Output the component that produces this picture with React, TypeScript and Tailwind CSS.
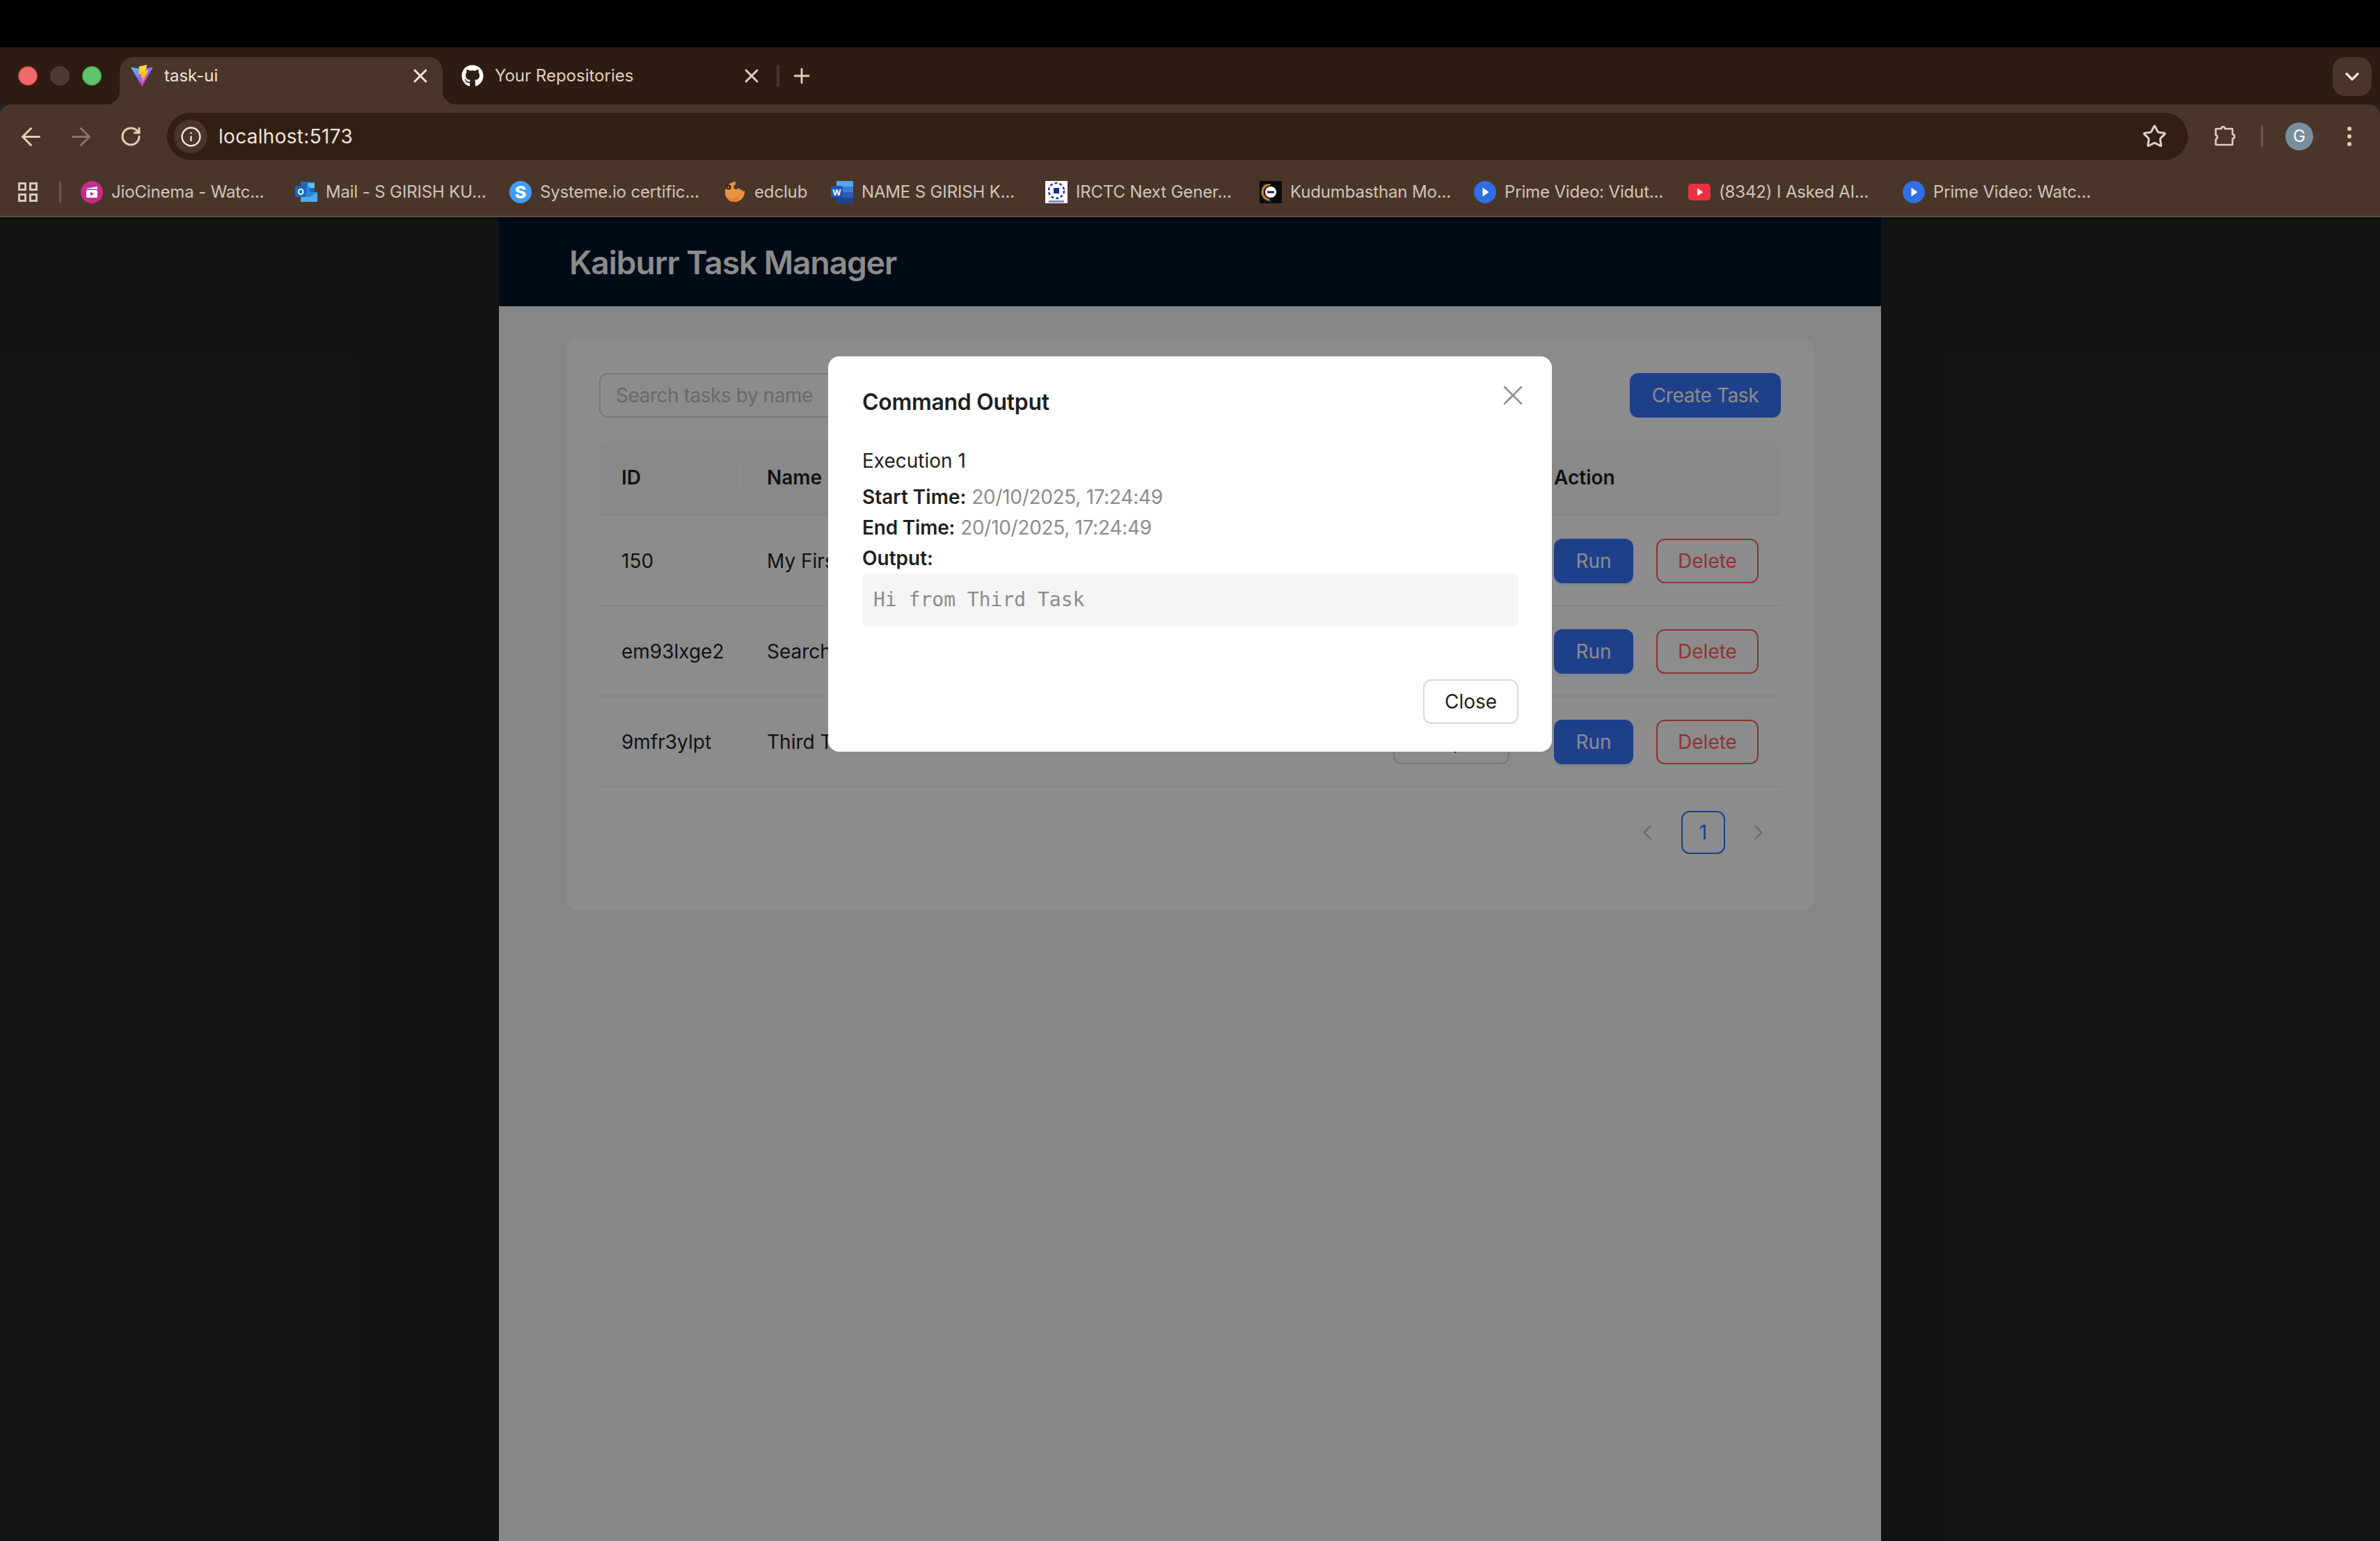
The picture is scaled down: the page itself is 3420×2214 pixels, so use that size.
import { ArrowLeft, ArrowRight, ChevronDown, ChevronLeft, ChevronRight, Info, Plus, RotateCw, Star, X } from 'lucide-react'
import { FaGithub } from 'react-icons/fa'

function ViteLogo() {
  return (
    <svg viewBox="0 0 410 404" className="w-[32px] h-[32px]" fill="none">
      <defs>
        <linearGradient id="vite-a" x1="6" y1="33" x2="235" y2="344" gradientUnits="userSpaceOnUse">
          <stop stopColor="#41D1FF" />
          <stop offset="1" stopColor="#BD34FE" />
        </linearGradient>
        <linearGradient id="vite-b" x1="194" y1="8" x2="236" y2="292" gradientUnits="userSpaceOnUse">
          <stop stopColor="#FFEA83" />
          <stop offset="0.08" stopColor="#FFDD35" />
          <stop offset="1" stopColor="#FFA800" />
        </linearGradient>
      </defs>
      <path
        d="M399.641 59.5246L215.643 388.545C211.844 395.338 202.084 395.378 198.228 388.618L10.5817 59.5563C6.38087 52.1896 12.6802 43.2665 21.0281 44.7586L205.223 77.6824C206.398 77.8924 207.601 77.8904 208.776 77.6763L389.119 44.8058C397.439 43.2894 403.768 52.1434 399.641 59.5246Z"
        fill="url(#vite-a)"
      />
      <path
        d="M292.965 1.5744L156.801 28.2552C154.563 28.6937 152.906 30.5903 152.771 32.8664L144.395 174.33C144.198 177.662 147.258 180.248 150.51 179.498L188.42 170.749C191.967 169.931 195.172 173.055 194.443 176.622L183.18 231.775C182.422 235.487 185.907 238.661 189.532 237.56L212.947 230.446C216.577 229.344 220.065 232.527 219.297 236.242L201.398 322.875C200.278 328.294 207.486 331.249 210.492 326.603L212.5 323.5L323.454 102.072C325.312 98.3645 322.108 94.137 318.036 94.9228L279.014 102.454C275.347 103.161 272.227 99.746 273.262 96.1583L298.731 7.86689C299.767 4.27314 296.636 0.855181 292.965 1.5744Z"
        fill="url(#vite-b)"
      />
    </svg>
  )
}

function JioIcon() {
  return (
    <svg viewBox="0 0 32 32" className="w-[32px] h-[32px]">
      <circle cx="16" cy="16" r="16" fill="#c92a8e" />
      <path d="M8 11l16-3v3.5H8z" fill="#fff" />
      <rect x="8" y="13" width="16" height="11" rx="1.5" fill="#fff" />
      <path d="M14 15.5l5 3-5 3z" fill="#c92a8e" />
    </svg>
  )
}

function OutlookIcon() {
  return (
    <svg viewBox="0 0 32 32" className="w-[32px] h-[32px]">
      <rect x="8" y="1" width="20" height="16" fill="#1f66b8" />
      <rect x="18" y="3" width="10" height="7" fill="#5cc1f0" />
      <rect x="13" y="8" width="8" height="8" fill="#2f7fd6" />
      <path d="M8 16h24v14H8z" fill="#2a86d8" />
      <path d="M9 17l11 7 12-8v14H8z" fill="#53a9e8" />
      <rect x="0" y="7" width="16" height="16" rx="1" fill="#1667c1" />
      <text x="8" y="20" textAnchor="middle" fontSize="12" fontWeight="700" fill="#fff" fontFamily="Inter, sans-serif">O</text>
    </svg>
  )
}

function WordIcon() {
  return (
    <svg viewBox="0 0 32 32" className="w-[32px] h-[32px]">
      <rect x="8" y="0" width="24" height="8" fill="#5aa5e8" />
      <rect x="8" y="8" width="24" height="8" fill="#3a7bd0" />
      <rect x="8" y="16" width="24" height="8" fill="#2a5db5" />
      <rect x="8" y="24" width="24" height="8" fill="#1c4596" />
      <rect x="0" y="7" width="17" height="17" rx="1" fill="#1f55b5" />
      <text x="8.5" y="20.5" textAnchor="middle" fontSize="12" fontWeight="700" fill="#fff" fontFamily="Inter, sans-serif">W</text>
    </svg>
  )
}

function SystemeIcon() {
  return (
    <svg viewBox="0 0 32 32" className="w-[32px] h-[32px]">
      <circle cx="16" cy="16" r="16" fill="#3f9df6" />
      <text x="16" y="24.5" textAnchor="middle" fontSize="25" fontWeight="800" fill="#fff" fontFamily="Inter, sans-serif">S</text>
    </svg>
  )
}

function EdclubIcon() {
  return (
    <svg viewBox="0 0 32 32" className="w-[32px] h-[32px]">
      <path
        d="M6 6c3-3 7-5 11-5-1 2 0 3 1 4-3 0-5 3-3 6 2 2 5 1 7-1l2 3 2-1 1 3 3-1c1 9-6 16-14 16C7 30 1 23 2 15c0-3 2-6 4-9z"
        fill="#ea9440"
      />
      <path d="M4 22c6 5 14 4 19-3 1 6-4 11-10 11-4 0-7-3-9-8z" fill="#e67d34" />
      <circle cx="7" cy="9" r="3.5" fill="#2b1b12" />
      <circle cx="6.5" cy="9" r="1" fill="#fff" />
    </svg>
  )
}

function IrctcIcon() {
  return (
    <svg viewBox="0 0 32 32" className="w-[32px] h-[32px]">
      <rect width="32" height="32" fill="#fff" />
      <circle cx="16" cy="14" r="11" fill="none" stroke="#2b3b9a" strokeWidth="2.5" strokeDasharray="4 3" />
      <rect x="12" y="10" width="8" height="8" fill="#1f2a8a" />
      <rect x="5" y="28" width="22" height="3" fill="#7f88c4" />
    </svg>
  )
}

function ZeeIcon() {
  return (
    <svg viewBox="0 0 32 32" className="w-[32px] h-[32px]">
      <rect width="32" height="32" fill="#0b0b0b" />
      <circle cx="16" cy="16" r="13" fill="none" stroke="#3fa58c" strokeWidth="1.2" strokeDasharray="34 48" strokeDashoffset="-20" />
      <circle cx="15" cy="16" r="11" fill="none" stroke="#e8a02c" strokeWidth="1.5" strokeDasharray="34 36" strokeDashoffset="-18" />
      <circle cx="15" cy="16" r="9.5" fill="none" stroke="#d9453c" strokeWidth="1.2" strokeDasharray="30 30" strokeDashoffset="-15" />
      <circle cx="16" cy="16" r="8" fill="#fff" />
      <rect x="11" y="14.5" width="10" height="3" fill="#222" />
    </svg>
  )
}

function PrimeIcon() {
  return (
    <svg viewBox="0 0 32 32" className="w-[32px] h-[32px]">
      <circle cx="16" cy="16" r="16" fill="#2f6fe4" />
      <path d="M12.5 9.5l9 6.5-9 6.5z" fill="#fff" />
    </svg>
  )
}

function YoutubeIcon() {
  return (
    <svg viewBox="0 0 32 32" className="w-[32px] h-[32px]">
      <rect y="4" width="32" height="24" rx="5" fill="#e9303f" />
      <path d="M13 10.5l8 5.5-8 5.5z" fill="#fff" />
    </svg>
  )
}

const bookmarks = [
  { title: 'JioCinema - Watc...', icon: <JioIcon />, width: 'w-[308px]' },
  { title: 'Mail - S GIRISH KU...', icon: <OutlookIcon />, width: 'w-[308px]' },
  { title: 'Systeme.io certific...', icon: <SystemeIcon />, width: 'w-[308px]' },
  { title: 'edclub', icon: <EdclubIcon />, width: 'w-[154px]' },
  { title: 'NAME S GIRISH K...', icon: <WordIcon />, width: 'w-[308px]' },
  { title: 'IRCTC Next Gener...', icon: <IrctcIcon />, width: 'w-[308px]' },
  { title: 'Kudumbasthan Mo...', icon: <ZeeIcon />, width: 'w-[308px]' },
  { title: 'Prime Video: Vidut...', icon: <PrimeIcon />, width: 'w-[308px]' },
  { title: '(8342) I Asked AI...', icon: <YoutubeIcon />, width: 'w-[308px]' },
  { title: 'Prime Video: Watc...', icon: <PrimeIcon />, width: 'w-[308px]' },
]

const tasks = [
  { id: '150', name: 'My First Task' },
  { id: 'em93lxge2', name: 'Search Task' },
  { id: '9mfr3ylpt', name: 'Third Task' },
]

function BrowserChrome() {
  return (
    <div className="shrink-0">
      <div className="h-[68px] bg-black" />
      <div className="h-[82px] bg-[#2d1c11] flex items-end relative">
        <div className="flex items-center gap-[18px] pl-[26px] w-[172px] h-full">
          <span className="w-[28px] h-[28px] rounded-full bg-[#ee6a6a] border border-[#d8342f]" />
          <span className="w-[28px] h-[28px] rounded-full bg-[#4a3a30]" />
          <span className="w-[28px] h-[28px] rounded-full bg-[#60c468] border border-[#3fa848]" />
        </div>
        <div className="relative w-[464px] h-[68px] bg-[#4a3629] rounded-t-[20px] flex items-center pl-[16px] pr-[16px] pb-[14px] text-[24px] text-[#efe3da]">
          <span className="absolute -left-[20px] bottom-0 w-[20px] h-[20px] bg-[radial-gradient(circle_at_0_0,transparent_20px,#4a3629_20.5px)]" />
          <span className="absolute -right-[20px] bottom-0 w-[20px] h-[20px] bg-[radial-gradient(circle_at_100%_0,transparent_20px,#4a3629_20.5px)]" />
          <ViteLogo />
          <span className="ml-[16px] flex-1">task-ui</span>
          <X className="w-[32px] h-[32px] text-[#efe3da]" strokeWidth={2.25} />
        </div>
        <div className="w-[480px] h-[68px] flex items-center pl-[27px] pr-[20px] pb-[14px] text-[24px] text-[#e3cdbb]">
          <FaGithub className="w-[32px] h-[32px] text-white" />
          <span className="ml-[16px] flex-1">Your Repositories</span>
          <X className="w-[32px] h-[32px] text-[#e3cdbb]" strokeWidth={2.25} />
        </div>
        <div className="h-[68px] flex items-center gap-[15px] pb-[14px]">
          <span className="w-[4px] h-[32px] bg-[#4a3629] rounded-full" />
          <Plus className="w-[34px] h-[34px] text-[#e3cdbb]" strokeWidth={2} />
        </div>
        <div className="absolute right-[12px] top-[14px] w-[56px] h-[56px] rounded-[18px] bg-[#4a3629] flex items-center justify-center">
          <ChevronDown className="w-[32px] h-[32px] text-[#efe3da]" strokeWidth={2.5} />
        </div>
      </div>
      <div className="h-[162px] bg-[#4a3629] rounded-t-[16px] border-b-2 border-[#5f5146]">
        <div className="h-[92px] flex items-center pl-[24px] pr-[24px]">
          <ArrowLeft className="w-[41px] h-[41px] text-[#e3cdbb]" strokeWidth={1.75} />
          <ArrowRight className="w-[41px] h-[41px] text-[#8a7465] ml-[31px]" strokeWidth={1.75} />
          <RotateCw className="w-[32px] h-[32px] text-[#e3cdbb] ml-[35px]" strokeWidth={2.25} />
          <div className="ml-[36px] w-[2904px] h-[68px] rounded-full bg-[#321f13] flex items-center pl-[10px] pr-[30px]">
            <div className="w-[48px] h-[48px] rounded-full bg-[#4a3629] flex items-center justify-center">
              <Info className="w-[31px] h-[31px] text-[#efe3da]" strokeWidth={1.9} />
            </div>
            <span className="ml-[16px] text-[28px] tracking-[0.3px] text-[#efe3da] flex-1">localhost:5173</span>
            <Star className="w-[36px] h-[36px] text-[#d8cfc8]" strokeWidth={2} />
          </div>
          <svg viewBox="0 0 32 32" className="ml-[38px] w-[32px] h-[32px] text-[#e3cdbb]" fill="none" stroke="currentColor" strokeWidth="2.6" strokeLinejoin="round">
            <path d="M2 5h8c0-4 5-4 5 0h11v8c4 0 4 6 0 6v9H2v-8c3-1 3-5 0-6z" />
          </svg>
          <span className="ml-[35px] w-[3px] h-[32px] bg-[#6b5a4e] rounded-full" />
          <div className="ml-[32px] w-[40px] h-[40px] rounded-full bg-[#7a8f9e] flex items-center justify-center text-[24px] text-white">G</div>
          <div className="ml-[49px] flex flex-col gap-[5px]">
            <span className="w-[6px] h-[6px] rounded-full bg-[#e3cdbb]" />
            <span className="w-[6px] h-[6px] rounded-full bg-[#e3cdbb]" />
            <span className="w-[6px] h-[6px] rounded-full bg-[#e3cdbb]" />
          </div>
        </div>
        <div className="flex items-center h-[48px] mt-[10px] pl-[26px]">
          <svg viewBox="0 0 28 28" className="w-[28px] h-[28px]" fill="none" stroke="#d4c8bf" strokeWidth="3">
            <rect x="1.5" y="1.5" width="9" height="9" />
            <rect x="17.5" y="1.5" width="9" height="9" />
            <rect x="1.5" y="17.5" width="9" height="9" />
            <rect x="17.5" y="17.5" width="9" height="9" />
          </svg>
          <span className="ml-[31px] w-[3px] h-[32px] bg-[#6b5a4e] rounded-full" />
          <div className="ml-[28px] flex items-center">
            {bookmarks.map((b, i) => (
              <div key={i} className={`flex items-center gap-[12px] text-[24px] tracking-[-0.15px] text-[#cfc4bc] whitespace-nowrap ${b.width}`}>
                {b.icon}
                <span>{b.title}</span>
              </div>
            ))}
          </div>
        </div>
      </div>
    </div>
  )
}

function TaskTable() {
  return (
    <div>
      <div className="h-[108px] bg-[#fafafa] rounded-t-[16px] border-b-2 border-[#f0f0f0] flex items-center text-[28px] font-semibold text-[#1f1f1f]">
        <div className="w-[209px] pl-[32px] relative">
          ID
          <span className="absolute right-0 top-0 w-[2px] h-[44px] bg-[#f0f0f0]" />
        </div>
        <div className="w-[1131px] pl-[32px]">Name</div>
        <div className="pl-[32px]">Action</div>
      </div>
      {tasks.map((t) => (
        <div key={t.id} className="h-[130px] pt-[2px] border-b-2 border-[#f0f0f0] flex items-center text-[28px] text-[#1f1f1f]">
          <div className="w-[209px] pl-[32px]">{t.id}</div>
          <div className="w-[900px] pl-[32px]">{t.name}</div>
          <div className="w-[231px] pl-[32px]">
            <button className="w-[167px] h-[64px] rounded-[12px] border-2 border-[#d9d9d9] bg-white text-[28px]">Output</button>
          </div>
          <div className="pl-[32px] flex items-center gap-[33px]">
            <button className="w-[114px] h-[64px] rounded-[12px] bg-[#3873fb] text-white text-[28px] shadow-[0_4px_0_rgba(5,145,255,0.1)]">Run</button>
            <button className="w-[147px] h-[64px] rounded-[12px] border-2 border-[#ff5f5f] bg-white text-[#ff5f5f] text-[28px]">Delete</button>
          </div>
        </div>
      ))}
    </div>
  )
}

function OutputModal() {
  return (
    <div className="absolute left-[1190px] top-[200px] w-[1040px] h-[568px] bg-white rounded-[16px] pl-[49px] pr-[48px] pt-[44px] text-[28px] text-[#1f1f1f] z-20">
      <button className="absolute right-[32px] top-[32px] text-[#8f8f8f]">
        <X className="w-[48px] h-[48px]" strokeWidth={1.25} />
      </button>
      <h2 className="text-[32px] leading-[44px] tracking-[-0.3px] font-semibold text-[#1f1f1f]">Command Output</h2>
      <div className="mt-[40px] leading-[44px]">Execution 1</div>
      <div className="mt-[8px] leading-[44px]">
        <strong className="font-semibold">Start Time:</strong> <span className="text-[#8c8c8c] tracking-[-0.3px]">20/10/2025, 17:24:49</span>
      </div>
      <div className="leading-[44px]">
        <strong className="font-semibold tracking-[-0.2px]">End Time:</strong> <span className="text-[#8c8c8c] tracking-[-0.3px]">20/10/2025, 17:24:49</span>
      </div>
      <div className="leading-[44px] font-semibold">Output:</div>
      <pre className="h-[76px] bg-[#f5f5f5] rounded-[8px] px-[16px] flex items-center font-['DejaVu_Sans_Mono',monospace] text-[28px] text-[#8c8c8c]">Hi from Third Task</pre>
      <div className="absolute right-[48px] bottom-[40px]">
        <button className="w-[137px] h-[64px] rounded-[12px] border-2 border-[#d9d9d9] bg-white text-[28px] text-[#1f1f1f] shadow-[0_4px_0_rgba(0,0,0,0.02)]">Close</button>
      </div>
    </div>
  )
}

export default function App() {
  return (
    <div className="w-[3420px] h-[2214px] flex flex-col overflow-hidden font-[Inter,sans-serif] bg-[#242424]">
      <BrowserChrome />
      <div className="relative flex-1 bg-[#242424]">
        <div className="mx-auto w-[1986px] h-full bg-[#f5f5f5]">
          <header className="h-[128px] bg-[#001529] flex items-center pl-[101px] pt-[2px]">
            <h1 className="text-[46px] font-semibold text-white tracking-[-1px]">Kaiburr Task Manager</h1>
          </header>
          <main className="px-[96px] pt-[48px]">
            <div className="h-[820px] bg-white rounded-[16px] px-[48px] pt-[48px]">
              <div className="flex items-center justify-between mb-[33px]">
                <input
                  placeholder="Search tasks by name"
                  className="w-[600px] h-[64px] rounded-[12px] border-2 border-[#d9d9d9] px-[22px] text-[28px] tracking-[-0.45px] placeholder:text-[#bfbfbf]"
                />
                <button className="w-[217px] h-[64px] rounded-[12px] bg-[#3873fb] text-white text-[28px] tracking-[-0.4px]">Create Task</button>
              </div>
              <TaskTable />
              <div className="flex items-center justify-end mt-[34px] pr-[14px]">
                <ChevronLeft className="w-[36px] h-[36px] text-[#bfbfbf]" strokeWidth={1.6} />
                <div className="ml-[31px] w-[63px] h-[62px] rounded-[12px] border-2 border-[#3873fb] text-[#3873fb] flex items-center justify-center text-[28px]">1</div>
                <ChevronRight className="ml-[30px] w-[36px] h-[36px] text-[#bfbfbf]" strokeWidth={1.6} />
              </div>
            </div>
          </main>
        </div>
        <div className="absolute inset-0 bg-black/45 z-10" />
        <OutputModal />
      </div>
    </div>
  )
}
